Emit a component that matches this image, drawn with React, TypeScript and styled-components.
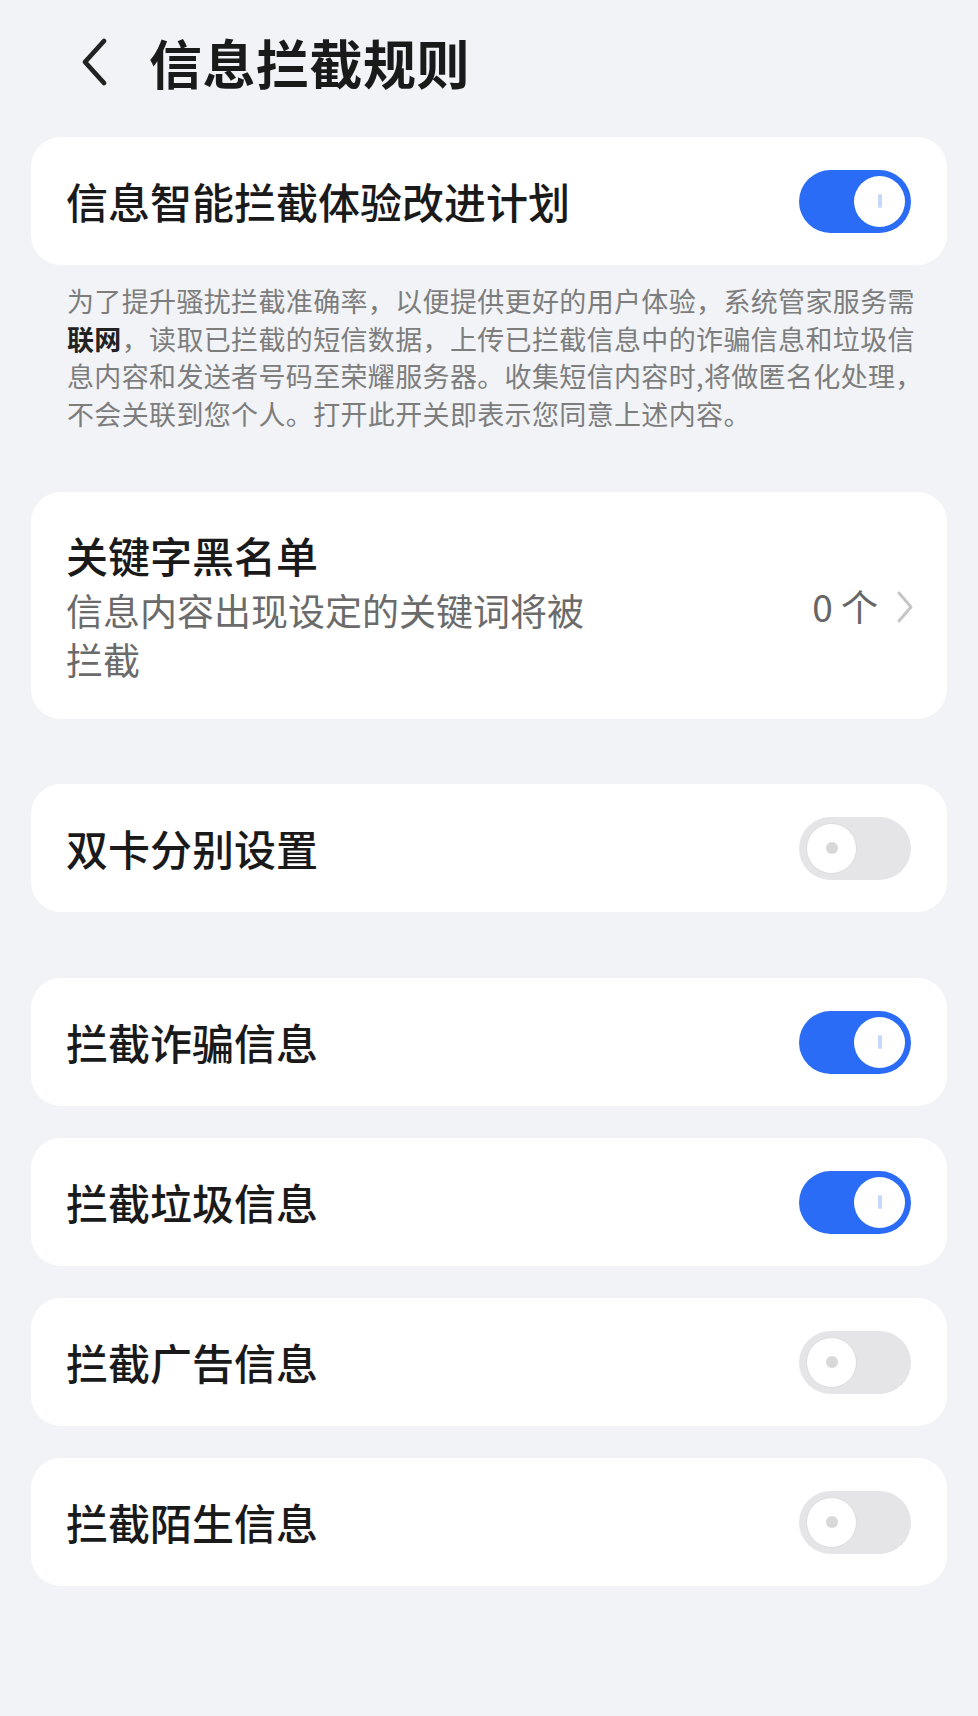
import React from 'react';
import styled, { createGlobalStyle } from 'styled-components';

const GlobalStyle = createGlobalStyle`
  html, body {
    margin: 0;
    padding: 0;
    background: #f1f3f6;
  }
  body {
    font-family: "Noto Sans CJK SC", "Noto Sans", Roboto, sans-serif;
    color: #1a1a1a;
  }
`;

const Page = styled.div`
  width: 978px;
  min-height: 1716px;
  box-sizing: border-box;
  padding: 0 31px;
  background: #f1f3f6;
`;

const Header = styled.div`
  display: flex;
  align-items: center;
  height: 64px;
  padding-top: 30px;
  gap: 36px;
  padding-left: 48px;
`;

const BackButton = styled.div`
  display: flex;
  align-items: center;
  width: 34px;
  height: 50px;
`;

const PageTitle = styled.h1`
  margin: 0;
  font-size: 53px;
  line-height: 64px;
  font-weight: 700;
  color: #1a1a1a;
  letter-spacing: 0.5px;
`;

const Card = styled.div<{ $gap?: number }>`
  display: flex;
  align-items: center;
  justify-content: space-between;
  background: #ffffff;
  border-radius: 30px;
  min-height: 128px;
  box-sizing: border-box;
  padding: 0 36px 0 35px;
  margin-top: ${p => p.$gap ?? 32}px;
`;

const TallCard = styled(Card)`
  padding: 37px 33px 35px 35px;
`;

const Label = styled.div`
  font-size: 42px;
  line-height: 52px;
  font-weight: 500;
  color: #1a1a1a;
`;

const TextBlock = styled.div`
  display: flex;
  flex-direction: column;
  align-self: flex-start;
`;

const Subtitle = styled.div`
  margin-top: 5px;
  max-width: 540px;
  font-size: 37px;
  line-height: 49px;
  color: #6b6b6b;
`;

const Note = styled.p`
  margin: 17px 0 0;
  padding: 0 20px 0 36px;
  font-size: 27px;
  line-height: 37.5px;
  letter-spacing: 0.35px;
  color: #7d7d7d;
  white-space: nowrap;

  strong {
    color: #222222;
    font-weight: 700;
  }
`;

const Value = styled.div`
  display: flex;
  align-items: center;
  gap: 18px;
  font-size: 37px;
  line-height: 49px;
  color: #666666;
`;

const Track = styled.div<{ $on: boolean }>`
  position: relative;
  flex: none;
  width: 112px;
  height: 63px;
  border-radius: 32px;
  background: ${p => (p.$on ? '#2b6cf6' : '#e5e5e7')};
`;

const Knob = styled.div<{ $on: boolean }>`
  position: absolute;
  top: 6px;
  left: ${p => (p.$on ? '55px' : '7px')};
  width: 51px;
  height: 51px;
  box-sizing: border-box;
  border-radius: 50%;
  background: #ffffff;
  border: ${p => (p.$on ? 'none' : '1px solid #dcdcdc')};
  display: flex;
  align-items: center;
  justify-content: center;
`;

const KnobBar = styled.span`
  width: 4px;
  height: 14px;
  border-radius: 2px;
  background: #c6d7fb;
`;

const KnobDot = styled.span`
  width: 12px;
  height: 12px;
  border-radius: 50%;
  background: #d8d8d8;
`;

const Toggle: React.FC<{ on: boolean }> = ({ on }) => (
  <Track $on={on}>
    <Knob $on={on}>{on ? <KnobBar /> : <KnobDot />}</Knob>
  </Track>
);

const ChevronLeft = () => (
  <svg width="30" height="50" viewBox="0 0 30 50" fill="none">
    <path d="M25 4 L6 25 L25 46" stroke="#222" strokeWidth="4.8" strokeLinecap="round" strokeLinejoin="round" />
  </svg>
);

const ChevronRight = () => (
  <svg width="18" height="34" viewBox="0 0 18 34" fill="none">
    <path d="M3 3 L15 17 L3 31" stroke="#c6c6c6" strokeWidth="3" strokeLinecap="round" strokeLinejoin="round" />
  </svg>
);

const switchRows: { label: string; on: boolean; gap: number }[] = [
  { label: '拦截诈骗信息', on: true, gap: 66 },
  { label: '拦截垃圾信息', on: true, gap: 32 },
  { label: '拦截广告信息', on: false, gap: 32 },
  { label: '拦截陌生信息', on: false, gap: 32 },
];

export default function App() {
  return (
    <Page>
      <GlobalStyle />
      <Header>
        <BackButton>
          <ChevronLeft />
        </BackButton>
        <PageTitle>信息拦截规则</PageTitle>
      </Header>

      <Card $gap={43}>
        <Label>信息智能拦截体验改进计划</Label>
        <Toggle on />
      </Card>
      <Note>
        为了提升骚扰拦截准确率，以便提供更好的用户体验，系统管家服务需<br />
        <strong>联网</strong>，读取已拦截的短信数据，上传已拦截信息中的诈骗信息和垃圾信<br />
        息内容和发送者号码至荣耀服务器。收集短信内容时,将做匿名化处理，<br />
        不会关联到您个人。打开此开关即表示您同意上述内容。
      </Note>

      <TallCard $gap={60}>
        <TextBlock>
          <Label>关键字黑名单</Label>
          <Subtitle>信息内容出现设定的关键词将被拦截</Subtitle>
        </TextBlock>
        <Value>
          <span>0 个</span>
          <ChevronRight />
        </Value>
      </TallCard>

      <Card $gap={65}>
        <Label>双卡分别设置</Label>
        <Toggle on={false} />
      </Card>

      {switchRows.map(r => (
        <Card key={r.label} $gap={r.gap}>
          <Label>{r.label}</Label>
          <Toggle on={r.on} />
        </Card>
      ))}
    </Page>
  );
}
